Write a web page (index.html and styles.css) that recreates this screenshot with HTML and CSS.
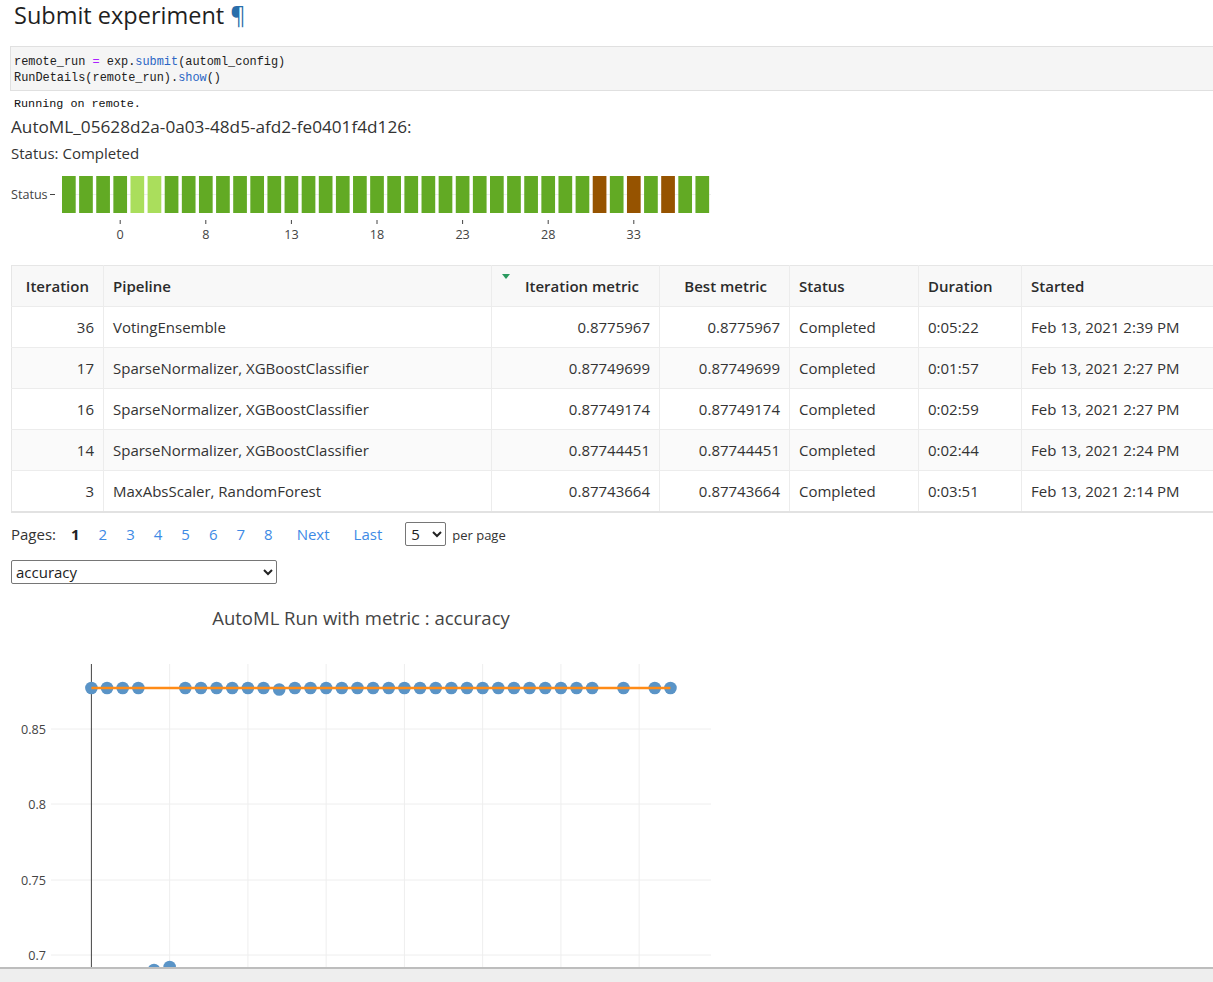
FILE: index.html
```html
<!DOCTYPE html>
<html lang="en">
<head>
<meta charset="utf-8">
<title>Submit experiment</title>
<link rel="stylesheet" href="styles.css">
</head>
<body>
<div class="notebook">
  <div class="cell">
    <h2 class="heading">Submit experiment <a class="anchor">¶</a></h2>
    <div class="code">
      <div class="code-line">remote_run <span class="op">=</span> exp.<span class="prop">submit</span>(automl_config)</div>
      <div class="code-line">RunDetails(remote_run).<span class="prop">show</span>()</div>
    </div>
    <div class="output">
      <pre class="stream">Running on remote.</pre>
      <div class="widget">
        <div class="run-title">AutoML_05628d2a-0a03-48d5-afd2-fe0401f4d126:</div>
        <div class="run-status">Status: Completed</div>

        <svg class="status-chart" width="720" height="84" viewBox="0 0 720 84">
          <line x1="51" y1="30.5" x2="700" y2="30.5" stroke="#eeeeee" stroke-width="1"/>
          <text x="0" y="35" class="axis-text">Status</text>
          <line x1="39" y1="30.5" x2="44" y2="30.5" stroke="#444" stroke-width="1"/>
          <g class="bars">
            <rect x="51" y="12" width="13.7" height="37" class="ok"/>
            <rect x="68.12" y="12" width="13.7" height="37" class="ok"/>
            <rect x="85.24" y="12" width="13.7" height="37" class="ok"/>
            <rect x="102.36" y="12" width="13.7" height="37" class="ok"/>
            <rect x="119.48" y="12" width="13.7" height="37" class="light"/>
            <rect x="136.6" y="12" width="13.7" height="37" class="light"/>
            <rect x="153.72" y="12" width="13.7" height="37" class="ok"/>
            <rect x="170.84" y="12" width="13.7" height="37" class="ok"/>
            <rect x="187.96" y="12" width="13.7" height="37" class="ok"/>
            <rect x="205.08" y="12" width="13.7" height="37" class="ok"/>
            <rect x="222.2" y="12" width="13.7" height="37" class="ok"/>
            <rect x="239.32" y="12" width="13.7" height="37" class="ok"/>
            <rect x="256.44" y="12" width="13.7" height="37" class="ok"/>
            <rect x="273.56" y="12" width="13.7" height="37" class="ok"/>
            <rect x="290.68" y="12" width="13.7" height="37" class="ok"/>
            <rect x="307.8" y="12" width="13.7" height="37" class="ok"/>
            <rect x="324.92" y="12" width="13.7" height="37" class="ok"/>
            <rect x="342.04" y="12" width="13.7" height="37" class="ok"/>
            <rect x="359.16" y="12" width="13.7" height="37" class="ok"/>
            <rect x="376.28" y="12" width="13.7" height="37" class="ok"/>
            <rect x="393.4" y="12" width="13.7" height="37" class="ok"/>
            <rect x="410.52" y="12" width="13.7" height="37" class="ok"/>
            <rect x="427.64" y="12" width="13.7" height="37" class="ok"/>
            <rect x="444.76" y="12" width="13.7" height="37" class="ok"/>
            <rect x="461.88" y="12" width="13.7" height="37" class="ok"/>
            <rect x="479" y="12" width="13.7" height="37" class="ok"/>
            <rect x="496.12" y="12" width="13.7" height="37" class="ok"/>
            <rect x="513.24" y="12" width="13.7" height="37" class="ok"/>
            <rect x="530.36" y="12" width="13.7" height="37" class="ok"/>
            <rect x="547.48" y="12" width="13.7" height="37" class="ok"/>
            <rect x="564.6" y="12" width="13.7" height="37" class="ok"/>
            <rect x="581.72" y="12" width="13.7" height="37" class="fail"/>
            <rect x="598.84" y="12" width="13.7" height="37" class="ok"/>
            <rect x="615.96" y="12" width="13.7" height="37" class="fail"/>
            <rect x="633.08" y="12" width="13.7" height="37" class="ok"/>
            <rect x="650.2" y="12" width="13.7" height="37" class="fail"/>
            <rect x="667.32" y="12" width="13.7" height="37" class="ok"/>
            <rect x="684.44" y="12" width="13.7" height="37" class="ok"/>
          </g>
          <g class="ticks" stroke="#444" stroke-width="1">
            <line x1="109.2" y1="56" x2="109.2" y2="60"/>
            <line x1="194.8" y1="56" x2="194.8" y2="60"/>
            <line x1="280.4" y1="56" x2="280.4" y2="60"/>
            <line x1="366" y1="56" x2="366" y2="60"/>
            <line x1="451.6" y1="56" x2="451.6" y2="60"/>
            <line x1="537.2" y1="56" x2="537.2" y2="60"/>
            <line x1="622.8" y1="56" x2="622.8" y2="60"/>
          </g>
          <g class="axis-text tick-labels">
            <text x="109.2" y="75">0</text>
            <text x="194.8" y="75">8</text>
            <text x="280.4" y="75">13</text>
            <text x="366" y="75">18</text>
            <text x="451.6" y="75">23</text>
            <text x="537.2" y="75">28</text>
            <text x="622.8" y="75">33</text>
          </g>
        </svg>

        <table class="runs">
          <thead>
            <tr>
              <th class="c-iter num">Iteration</th>
              <th class="c-pipe">Pipeline</th>
              <th class="c-metric num sorted">Iteration metric<span class="sort-arrow"></span></th>
              <th class="c-best num">Best metric</th>
              <th class="c-status">Status</th>
              <th class="c-dur">Duration</th>
              <th class="c-start">Started</th>
            </tr>
          </thead>
          <tbody>
            <tr>
              <td class="num">36</td><td>VotingEnsemble</td><td class="num">0.8775967</td><td class="num">0.8775967</td><td>Completed</td><td>0:05:22</td><td>Feb 13, 2021 2:39 PM</td>
            </tr>
            <tr>
              <td class="num">17</td><td>SparseNormalizer, XGBoostClassifier</td><td class="num">0.87749699</td><td class="num">0.87749699</td><td>Completed</td><td>0:01:57</td><td>Feb 13, 2021 2:27 PM</td>
            </tr>
            <tr>
              <td class="num">16</td><td>SparseNormalizer, XGBoostClassifier</td><td class="num">0.87749174</td><td class="num">0.87749174</td><td>Completed</td><td>0:02:59</td><td>Feb 13, 2021 2:27 PM</td>
            </tr>
            <tr>
              <td class="num">14</td><td>SparseNormalizer, XGBoostClassifier</td><td class="num">0.87744451</td><td class="num">0.87744451</td><td>Completed</td><td>0:02:44</td><td>Feb 13, 2021 2:24 PM</td>
            </tr>
            <tr>
              <td class="num">3</td><td>MaxAbsScaler, RandomForest</td><td class="num">0.87743664</td><td class="num">0.87743664</td><td>Completed</td><td>0:03:51</td><td>Feb 13, 2021 2:14 PM</td>
            </tr>
          </tbody>
        </table>

        <div class="pager">
          <span class="pager-label">Pages:</span>
          <span class="page current">1</span>
          <a class="page">2</a>
          <a class="page">3</a>
          <a class="page">4</a>
          <a class="page">5</a>
          <a class="page">6</a>
          <a class="page">7</a>
          <a class="page last-num">8</a>
          <a class="page-nav next">Next</a>
          <a class="page-nav last">Last</a>
          <select class="per-page"><option>5</option><option>10</option><option>20</option></select>
          <span class="per-page-label">per page</span>
        </div>

        <select class="metric-select"><option>accuracy</option><option>AUC_weighted</option></select>

        <svg class="metric-chart" width="720" height="380" viewBox="0 0 720 380">
          <text x="350" y="25" class="chart-title">AutoML Run with metric : accuracy</text>
          <g stroke="#eeeeee" stroke-width="1">
            <line x1="40" y1="129" x2="700" y2="129"/>
            <line x1="40" y1="204" x2="700" y2="204"/>
            <line x1="40" y1="280" x2="700" y2="280"/>
            <line x1="40" y1="355" x2="700" y2="355"/>
            <line x1="158.65" y1="64" x2="158.65" y2="380"/>
            <line x1="236.9" y1="64" x2="236.9" y2="380"/>
            <line x1="315.15" y1="64" x2="315.15" y2="380"/>
            <line x1="393.4" y1="64" x2="393.4" y2="380"/>
            <line x1="471.65" y1="64" x2="471.65" y2="380"/>
            <line x1="549.9" y1="64" x2="549.9" y2="380"/>
            <line x1="628.15" y1="64" x2="628.15" y2="380"/>
          </g>
          <line x1="80.4" y1="64" x2="80.4" y2="380" stroke="#444" stroke-width="1"/>
          <g class="axis-text y-labels">
            <text x="35" y="133.5">0.85</text>
            <text x="35" y="208.5">0.8</text>
            <text x="35" y="284.5">0.75</text>
            <text x="35" y="359.5">0.7</text>
          </g>
          <g class="points">
            <circle cx="80.4" cy="88" r="6.3"/>
            <circle cx="96.05" cy="88" r="6.3"/>
            <circle cx="111.7" cy="88" r="6.3"/>
            <circle cx="127.35" cy="88" r="6.3"/>
            <circle cx="143" cy="370" r="6.3"/>
            <circle cx="158.65" cy="367" r="6.3"/>
            <circle cx="174.3" cy="88" r="6.3"/>
            <circle cx="189.95" cy="88" r="6.3"/>
            <circle cx="205.6" cy="88" r="6.3"/>
            <circle cx="221.25" cy="88" r="6.3"/>
            <circle cx="236.9" cy="88" r="6.3"/>
            <circle cx="252.55" cy="88" r="6.3"/>
            <circle cx="268.2" cy="89.5" r="6.3"/>
            <circle cx="283.85" cy="88" r="6.3"/>
            <circle cx="299.5" cy="88" r="6.3"/>
            <circle cx="315.15" cy="88" r="6.3"/>
            <circle cx="330.8" cy="88" r="6.3"/>
            <circle cx="346.45" cy="88" r="6.3"/>
            <circle cx="362.1" cy="88" r="6.3"/>
            <circle cx="377.75" cy="88" r="6.3"/>
            <circle cx="393.4" cy="88" r="6.3"/>
            <circle cx="409.05" cy="88" r="6.3"/>
            <circle cx="424.7" cy="88" r="6.3"/>
            <circle cx="440.35" cy="88" r="6.3"/>
            <circle cx="456" cy="88" r="6.3"/>
            <circle cx="471.65" cy="88" r="6.3"/>
            <circle cx="487.3" cy="88" r="6.3"/>
            <circle cx="502.95" cy="88" r="6.3"/>
            <circle cx="518.6" cy="88" r="6.3"/>
            <circle cx="534.25" cy="88" r="6.3"/>
            <circle cx="549.9" cy="88" r="6.3"/>
            <circle cx="565.55" cy="88" r="6.3"/>
            <circle cx="581.2" cy="88" r="6.3"/>
            <circle cx="612.5" cy="88" r="6.3"/>
            <circle cx="643.8" cy="88" r="6.3"/>
            <circle cx="659.45" cy="88" r="6.3"/>
          </g>
          <line x1="80.4" y1="88" x2="659.45" y2="88" class="best-line"/>
        </svg>
      </div>
    </div>
  </div>
</div>
<div class="statusbar"></div>
</body>
</html>
```

FILE: styles.css
```css
html, body {
  margin: 0;
  padding: 0;
  background: #ffffff;
}

body {
  font-family: "Open Sans", "Noto Sans", sans-serif;
  color: #333333;
  overflow: hidden;
  width: 1213px;
  height: 982px;
}

.notebook {
  height: 967px;
  overflow: hidden;
  width: 1213px;
}

.cell {
  width: 1260px;
}

.heading {
  margin: 0;
  padding: 1px 0 0 14px;
  font-size: 23.5px;
  line-height: 28px;
  font-weight: 400;
  color: #1f1f1f;
}

.anchor {
  color: #296eaa;
  text-decoration: none;
}

.code {
  margin: 17px 0 0 10px;
  border: 1px solid #e0e0e0;
  background: #f5f5f5;
  padding: 7px 3px 4px;
}

.code-line {
  white-space: pre;
  font-family: "Liberation Mono", "DejaVu Sans Mono", monospace;
  font-size: 11.9px;
  line-height: 16px;
  color: #212121;
}

.code .op {
  color: #aa22ff;
}

.code .prop {
  color: #2a65c4;
}

.stream {
  margin: 0;
  padding: 6px 0 0 14px;
  font-family: "Liberation Mono", "DejaVu Sans Mono", monospace;
  font-size: 11.75px;
  line-height: 14px;
  color: #111111;
}

.widget {
  padding-left: 11px;
}

.run-title {
  margin-top: 5px;
  font-size: 17.2px;
  line-height: 22px;
  color: #333333;
}

.run-status {
  margin-top: 4px;
  font-size: 15px;
  line-height: 22px;
  color: #333333;
}

.status-chart {
  display: block;
}

.axis-text {
  font-family: "Open Sans", "Noto Sans", sans-serif;
  font-size: 12.6px;
  fill: #444444;
}

.tick-labels {
  text-anchor: middle;
}

.y-labels {
  text-anchor: end;
}

.bars .ok {
  fill: #62aa24;
}

.bars .light {
  fill: #aade5c;
}

.bars .fail {
  fill: #965300;
}

/* table */
.runs {
  margin-top: 17px;
  border-collapse: collapse;
  table-layout: fixed;
  width: 1240px;
  font-size: 15px;
  color: #333333;
  border-top: 1px solid #e6e6e6;
  border-left: 1px solid #e6e6e6;
  border-bottom: 2px solid #e2e2e2;
}

.runs th,
.runs td {
  box-sizing: border-box;
  height: 41px;
  padding: 0 9px;
  border-right: 1px solid #ececec;
  border-bottom: 1px solid #ececec;
  white-space: nowrap;
  text-align: left;
  vertical-align: middle;
}

.runs th {
  font-weight: 600;
  background: #f8f8f8;
  color: #2b2b2b;
}

.runs tbody tr:nth-child(even) td {
  background: #fafafa;
}

.runs .num {
  text-align: right;
}

.runs th.c-iter {
  padding-right: 14px;
}

.runs th.c-metric {
  padding-right: 20px;
}

.runs th.c-best {
  padding-right: 22px;
}

.c-iter { width: 92px; }
.c-pipe { width: 388px; }
.c-metric { width: 168px; }
.c-best { width: 130px; }
.c-status { width: 129px; }
.c-dur { width: 103px; }
.c-start { width: 230px; }

.sorted {
  position: relative;
}

.sort-arrow {
  position: absolute;
  left: 10px;
  top: 8px;
  width: 0;
  height: 0;
  border-left: 4px solid transparent;
  border-right: 4px solid transparent;
  border-top: 5px solid #2a9a5f;
}

/* pager */
.pager {
  margin-top: 9px;
  height: 24px;
  display: flex;
  align-items: center;
  font-size: 15px;
  color: #333333;
}

.pager-label {
  margin-right: 15px;
}

.page {
  margin-right: 19px;
  color: #3d8ae5;
  text-decoration: none;
  cursor: pointer;
}

.page.current {
  color: #222222;
  font-weight: 700;
}

.page.last-num {
  margin-right: 24px;
}

.page-nav {
  color: #3d8ae5;
  cursor: pointer;
}

.page-nav.next {
  margin-right: 24px;
}

.page-nav.last {
  margin-right: 23px;
}

.per-page {
  width: 41px;
  height: 24px;
  font-family: "Open Sans", "Noto Sans", sans-serif;
  font-size: 15px;
  color: #222222;
  border: 1px solid #767676;
  border-radius: 2px;
  background: #ffffff;
  padding: 0 0 0 1px;
  margin-right: 6px;
}

.per-page-label {
  font-size: 13px;
  color: #333333;
  padding-top: 3px;
}

.metric-select {
  display: block;
  margin-top: 14px;
  width: 266px;
  height: 24px;
  font-family: "Open Sans", "Noto Sans", sans-serif;
  font-size: 15px;
  color: #222222;
  border: 1px solid #767676;
  border-radius: 2px;
  background: #ffffff;
  padding: 0;
}

.metric-chart {
  display: block;
  margin-top: 16px;
}

.chart-title {
  font-family: "Open Sans", "Noto Sans", sans-serif;
  font-size: 18.5px;
  fill: #444444;
  text-anchor: middle;
}

.points circle {
  fill: #5a94c7;
}

.best-line {
  stroke: #ff8b17;
  stroke-width: 2.4;
}

.statusbar {
  height: 13px;
  border-top: 2px solid #bdbdbd;
  background: #eeeeee;
}
```
